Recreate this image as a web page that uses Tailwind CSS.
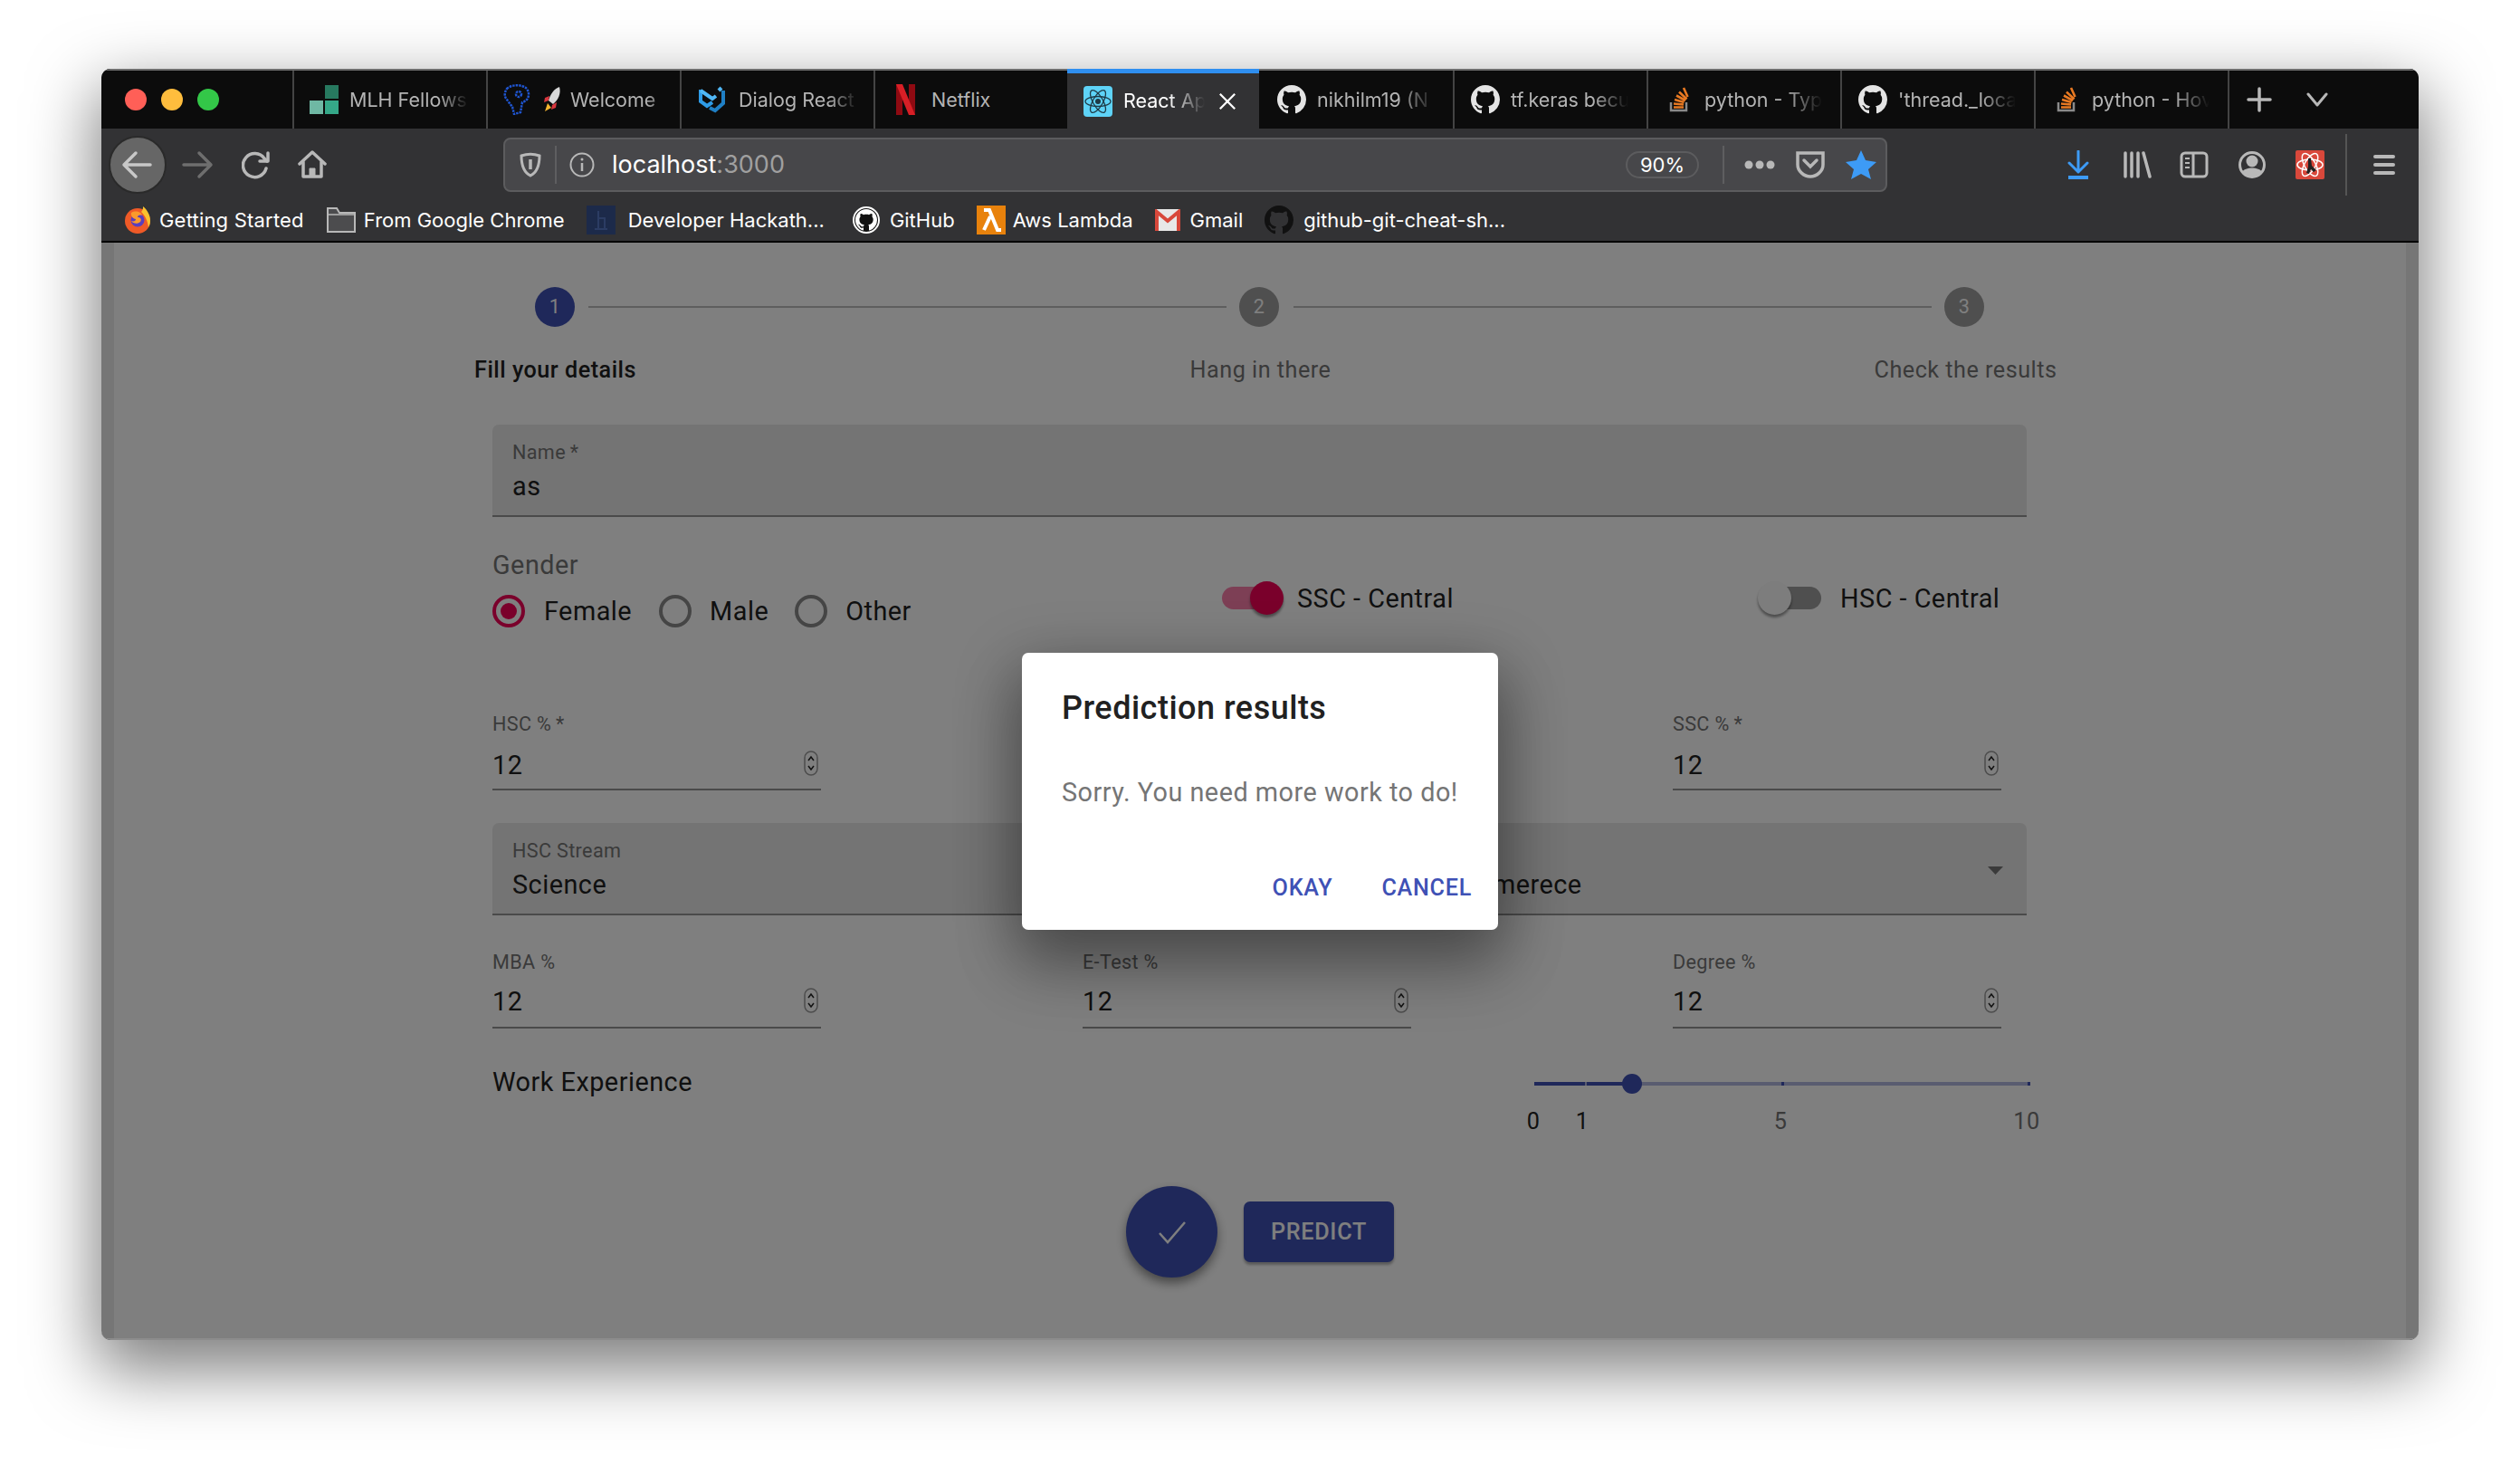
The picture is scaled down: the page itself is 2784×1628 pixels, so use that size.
<!DOCTYPE html>
<html lang="en">
<head>
  <meta charset="UTF-8" />
  <title>React App</title>
  <script src="https://cdn.jsdelivr.net/npm/@tailwindcss/browser@4"></script>
</head>
<body class="bg-white h-[1628px] pt-[76px]">
  <svg class="hidden">
    <defs>
      <symbol id="gh" viewBox="0 0 16 16"><path fill="currentColor" d="M8 0C3.58 0 0 3.58 0 8c0 3.54 2.29 6.53 5.47 7.59.4.07.55-.17.55-.38 0-.19-.01-.82-.01-1.49-2.01.37-2.53-.49-2.69-.94-.09-.23-.48-.94-.82-1.13-.28-.15-.68-.52-.01-.53.63-.01 1.08.58 1.23.82.72 1.21 1.87.87 2.33.66.07-.52.28-.87.51-1.07-1.78-.2-3.64-.89-3.64-3.95 0-.87.31-1.59.82-2.15-.08-.2-.36-1.02.08-2.12 0 0 .67-.21 2.2.82.64-.18 1.32-.27 2-.27.68 0 1.36.09 2 .27 1.53-1.04 2.2-.82 2.2-.82.44 1.1.16 1.92.08 2.12.51.56.82 1.27.82 2.15 0 3.07-1.87 3.75-3.65 3.95.29.25.54.73.54 1.48 0 1.07-.01 1.93-.01 2.2 0 .21.15.46.55.38A8.013 8.013 0 0016 8c0-4.42-3.58-8-8-8z"/></symbol>
      <symbol id="so" viewBox="0 0 32 32"><path d="M7 19v9h17v-9" fill="none" stroke="#8a8a8a" stroke-width="2.5"/><path d="M10 24.500h11M10 20.500l11 1M11 16l10.500 3M13 11.500l10 5.500M16 7.500l8.500 8M21 3l4.500 10" fill="none" stroke="#e87922" stroke-width="2.600"/></symbol>
      <symbol id="spin" viewBox="0 0 16 28"><rect x="1" y="1" width="14" height="26" rx="7" fill="none" stroke="#9a9a9a" stroke-width="1.500"/><path d="M5 11l3-4 3 4M5 17l3 4 3-4" fill="none" stroke="#222" stroke-width="1.500"/></symbol>
    </defs>
  </svg>

  <div class="ml-[112px] w-[2560px] h-[1404px] rounded-[10px] overflow-hidden flex flex-col bg-[#323234] shadow-[0_28px_72px_6px_rgba(0,0,0,0.5)] font-['Inter',sans-serif]">

    <!-- Tabs -->
    <div class="h-[66px] flex bg-[#0c0c0c] border-t-2 border-[#6e6e6e] text-[#b4b4b4] text-[21.5px] shrink-0">
      <div class="w-[211px] flex items-center pl-[26px] gap-[16px]">
        <span class="w-[24px] h-[24px] rounded-full bg-[#ff5f57]"></span>
        <span class="w-[24px] h-[24px] rounded-full bg-[#ffbd3d]"></span>
        <span class="w-[24px] h-[24px] rounded-full bg-[#33c748]"></span>
      </div>
      <div class="w-[214px] flex items-center pl-[17px] gap-[12px] border-l-2 border-[#444]">
        <svg class="w-[32px] h-[32px] shrink-0" viewBox="0 0 32 32"><rect x="17" y="0" width="15" height="15" fill="#27795f"/><rect x="17" y="17" width="15" height="15" fill="#35a888"/><rect x="0" y="17" width="15" height="15" fill="#6fb8a4"/></svg>
        <span class="w-[132px] overflow-hidden whitespace-nowrap [mask-image:linear-gradient(to_right,black_75%,transparent)]">MLH Fellows</span>
      </div>
      <div class="w-[214px] flex items-center pl-[16px] border-l-2 border-[#444]">
        <svg class="w-[32px] h-[34px] shrink-0" viewBox="0 0 32 34" fill="none" stroke="#1f55d0" stroke-width="2.500" stroke-dasharray="2.500 1"><path d="M5 5c5-5 17-5 22 0 4 6 2 13-5 15l-2 11-7 2-2-8-6-8C2 14 2 9 5 5z"/><circle cx="18" cy="11" r="3"/></svg>
        <svg class="w-[24px] h-[32px] ml-[12px] shrink-0" viewBox="0 0 24 32"><path d="M19 2c2 7-1 14-7 19l-5-4C9 10 13 4 19 2z" fill="#d8d8d8"/><path d="M8 12L3 14l-1 5 5-2zM16 19l-1 6-5 2 1-5z" fill="#d9363e"/><path d="M6 20l-3 9 7-4z" fill="#f5b52e"/></svg>
        <span class="ml-[7px] w-[112px] overflow-hidden whitespace-nowrap [mask-image:linear-gradient(to_right,black_75%,transparent)]">Welcome</span>
      </div>
      <div class="w-[214px] flex items-center pl-[19px] gap-[14px] border-l-2 border-[#444]">
        <svg class="w-[30px] h-[32px] shrink-0" viewBox="0 0 30 32" fill="none" stroke-width="4"><path d="M2 5v13l7 5 6-4" stroke="#2e9be6"/><path d="M2 6l13 9 4-3" stroke="#50b7f5"/><path d="M27 6v14l-9 8-6-3" stroke="#1f7fc4"/><path d="M25 3l-3 3" stroke="#50b7f5"/></svg>
        <span class="w-[132px] overflow-hidden whitespace-nowrap [mask-image:linear-gradient(to_right,black_75%,transparent)]">Dialog React</span>
      </div>
      <div class="w-[214px] flex items-center pl-[23px] gap-[18px] border-l-2 border-[#444]">
        <svg class="w-[21px] h-[34px] shrink-0" viewBox="0 0 21 34"><path d="M0 0h7v34l-7 0z" fill="#8f0a12"/><path d="M14 0h7v34h-7z" fill="#8f0a12"/><path d="M0 0h7l14 34h-7z" fill="#d81f26"/></svg>
        <span class="w-[132px] overflow-hidden whitespace-nowrap">Netflix</span>
      </div>
      <div class="w-[212px] flex items-center pl-[18px] gap-[12px] bg-[#323234] -mt-[2px] border-t-[5px] border-[#2f8ff0] text-white relative">
        <svg class="w-[32px] h-[34px] shrink-0" viewBox="0 0 32 34"><rect width="32" height="34" rx="4" fill="#5ed3f7"/><g fill="none" stroke="#1e3a46" stroke-width="1.300"><ellipse cx="16" cy="17" rx="14" ry="5.500"/><ellipse cx="16" cy="17" rx="14" ry="5.500" transform="rotate(60 16 17)"/><ellipse cx="16" cy="17" rx="14" ry="5.500" transform="rotate(120 16 17)"/></g><circle cx="16" cy="17" r="3" fill="#1e3a46"/></svg>
        <span class="w-[90px] overflow-hidden whitespace-nowrap [mask-image:linear-gradient(to_right,black_55%,transparent)]">React Ap</span>
        <svg class="w-[20px] h-[20px] ml-[3px] shrink-0" viewBox="0 0 22 22" fill="none" stroke="#fff" stroke-width="2.500"><path d="M2 2l18 18M20 2L2 20"/></svg>
      </div>
      <div class="w-[214px] flex items-center pl-[20px] gap-[12px] text-[#b4b4b4]">
        <svg class="w-[32px] h-[32px] shrink-0 text-[#e4e4e4]"><use href="#gh"/></svg>
        <span class="w-[130px] overflow-hidden whitespace-nowrap [mask-image:linear-gradient(to_right,black_70%,transparent)]">nikhilm19 (N</span>
      </div>
      <div class="w-[214px] flex items-center pl-[18px] gap-[12px] border-l-2 border-[#444]">
        <svg class="w-[32px] h-[32px] shrink-0 text-[#e4e4e4]"><use href="#gh"/></svg>
        <span class="w-[130px] overflow-hidden whitespace-nowrap [mask-image:linear-gradient(to_right,black_70%,transparent)]">tf.keras becu</span>
      </div>
      <div class="w-[214px] flex items-center pl-[18px] gap-[12px] border-l-2 border-[#444]">
        <svg class="w-[32px] h-[32px] shrink-0"><use href="#so"/></svg>
        <span class="w-[130px] overflow-hidden whitespace-nowrap [mask-image:linear-gradient(to_right,black_70%,transparent)]">python - Typ</span>
      </div>
      <div class="w-[214px] flex items-center pl-[18px] gap-[12px] border-l-2 border-[#444]">
        <svg class="w-[32px] h-[32px] shrink-0 text-[#e4e4e4]"><use href="#gh"/></svg>
        <span class="w-[130px] overflow-hidden whitespace-nowrap [mask-image:linear-gradient(to_right,black_70%,transparent)]">'thread._loca</span>
      </div>
      <div class="w-[214px] flex items-center pl-[18px] gap-[12px] border-l-2 border-[#444]">
        <svg class="w-[32px] h-[32px] shrink-0"><use href="#so"/></svg>
        <span class="w-[130px] overflow-hidden whitespace-nowrap [mask-image:linear-gradient(to_right,black_70%,transparent)]">python - Hov</span>
      </div>
      <div class="flex-1 flex items-center pl-[19px] border-l-2 border-[#444]">
        <svg class="w-[28px] h-[28px]" viewBox="0 0 28 28" stroke="#b8b8b8" stroke-width="3.500" stroke-linecap="round"><path d="M14 2v24M2 14h24"/></svg>
        <svg class="w-[24px] h-[16px] ml-[38px]" viewBox="0 0 24 16" fill="none" stroke="#b8b8b8" stroke-width="3" stroke-linecap="round" stroke-linejoin="round"><path d="M2 2l10 12L22 2"/></svg>
      </div>
    </div>

    <!-- Toolbar -->
    <div class="h-[76px] flex items-center pl-[8px] pt-[4px] shrink-0 text-[#b8b8b8]">
      <div class="w-[64px] h-[64px] rounded-full bg-[#666] border-2 border-[#2a2a2a] flex items-center justify-center">
        <svg class="w-[36px] h-[32px]" viewBox="0 0 36 32" fill="none" stroke="#c8c8c8" stroke-width="3.500" stroke-linecap="round" stroke-linejoin="round"><path d="M32 16H3M16 3L3 16l13 13"/></svg>
      </div>
      <svg class="w-[36px] h-[32px] ml-[16px]" viewBox="0 0 36 32" fill="none" stroke="#6e6e6e" stroke-width="3.500" stroke-linecap="round" stroke-linejoin="round"><path d="M3 16h29M20 3l13 13-13 13"/></svg>
      <svg class="w-[32px] h-[32px] ml-[31px]" viewBox="0 0 32 32" fill="none" stroke="#b8b8b8" stroke-width="3.500" stroke-linecap="round" stroke-linejoin="round"><path d="M27 20a13 13 0 1 1-2-11l3 3"/><path d="M29 3v9h-9"/></svg>
      <svg class="w-[32px] h-[32px] ml-[30px]" viewBox="0 0 32 32" fill="none" stroke="#b8b8b8" stroke-width="3.500" stroke-linecap="round" stroke-linejoin="round"><path d="M2 15L16 2l14 13"/><path d="M6 13v16h20V13"/><path d="M13 29v-9h6v9" fill="#b8b8b8" stroke-width="1"/></svg>

      <div class="ml-[195px] w-[1529px] h-[60px] rounded-[8px] bg-[#47474a] border-2 border-[#5c5c5e] flex items-center pl-[16px] pr-[10px]">
        <svg class="w-[24px] h-[28px]" viewBox="0 0 24 28" fill="none" stroke="#b8b8b8" stroke-width="3"><path d="M2 4c6-2 14-2 20 0 0 10-2 18-10 22C4 22 2 14 2 4z"/><path d="M12 8v11" stroke-width="3.500"/></svg>
        <span class="w-[2px] h-[42px] bg-[#5e5e60] ml-[15px]"></span>
        <svg class="w-[28px] h-[28px] ml-[14px]" viewBox="0 0 28 28" fill="none" stroke="#b8b8b8" stroke-width="2"><circle cx="14" cy="14" r="12.500"/><path d="M14 12v9" stroke-width="2.500"/><circle cx="14" cy="8" r="1.500" fill="#b8b8b8" stroke="none"/></svg>
        <span class="ml-[19px] text-[27px] text-white whitespace-nowrap">localhost<span class="text-[#a0a0a0]">:3000</span></span>
        <span class="ml-auto w-[81px] h-[30px] rounded-full border-2 border-[#5c5c5e] flex items-center justify-center text-[22px] text-white">90%</span>
        <span class="w-[2px] h-[42px] bg-[#5e5e60] ml-[26px]"></span>
        <svg class="w-[34px] h-[10px] ml-[22px]" viewBox="0 0 34 10" fill="#b8b8b8"><circle cx="5" cy="5" r="4.500"/><circle cx="17" cy="5" r="4.500"/><circle cx="29" cy="5" r="4.500"/></svg>
        <svg class="w-[32px] h-[30px] ml-[23px]" viewBox="0 0 32 30" fill="none" stroke="#b8b8b8" stroke-width="3.500"><path d="M2 2h28v13c0 7-7 13-14 13S2 22 2 15z"/><path d="M9 10l7 7 7-7" stroke-linecap="round"/></svg>
        <svg class="w-[34px] h-[32px] ml-[23px]" viewBox="0 0 34 32" fill="#3d9bf6"><path d="M17 0l5 11 12 2-9 8 3 11-11-6-11 6 3-11-9-8 12-2z"/></svg>
      </div>

      <svg class="w-[26px] h-[32px] ml-[198px]" viewBox="0 0 26 32" fill="none" stroke="#3d9bf6" stroke-width="3" stroke-linecap="round" stroke-linejoin="round"><path d="M13 1v22M3 14l10 10 10-10"/><path d="M2 30h22" stroke-width="4" stroke-linecap="butt"/></svg>
      <svg class="w-[32px] h-[30px] ml-[36px]" viewBox="0 0 32 30" fill="none" stroke="#b8b8b8" stroke-width="3.500" stroke-linecap="round"><path d="M3 2v26M10 2v26M17 2v26M23 2l7 26"/></svg>
      <svg class="w-[32px] h-[30px] ml-[31px]" viewBox="0 0 32 30" fill="none" stroke="#b8b8b8" stroke-width="3"><rect x="2" y="2" width="28" height="26" rx="4"/><path d="M15 2v26"/><path d="M6 8h5M6 13h5M6 18h5" stroke-width="2"/></svg>
      <svg class="w-[30px] h-[32px] ml-[33px]" viewBox="0 0 30 32"><circle cx="15" cy="16" r="13.500" fill="none" stroke="#b8b8b8" stroke-width="3"/><circle cx="15" cy="12" r="6.500" fill="#b8b8b8"/><path d="M4 24c3-6 19-6 22 0-3 6-19 6-22 0z" fill="#b8b8b8"/></svg>
      <svg class="w-[32px] h-[32px] ml-[33px]" viewBox="0 0 32 32"><rect width="32" height="32" rx="2" fill="#d9483b"/><g fill="none" stroke="#fff" stroke-width="1.500"><ellipse cx="16" cy="16" rx="14" ry="6"/><ellipse cx="16" cy="16" rx="14" ry="6" transform="rotate(60 16 16)"/><ellipse cx="16" cy="16" rx="14" ry="6" transform="rotate(120 16 16)"/></g><path d="M14 9h3l1 8 5 5-3 2-3-3-2 5-3-1 2-7z" fill="#222"/></svg>
      <span class="w-[2px] h-[68px] bg-[#555] ml-[23px]"></span>
      <svg class="w-[24px] h-[22px] ml-[29px]" viewBox="0 0 24 22" fill="#b8b8b8"><rect width="24" height="4" rx="2"/><rect y="9" width="24" height="4" rx="2"/><rect y="18" width="24" height="4" rx="2"/></svg>
    </div>

    <!-- Bookmarks -->
    <div class="h-[48px] flex items-center pl-[25px] pt-[2px] text-[22px] text-white whitespace-nowrap shrink-0">
      <svg class="w-[30px] h-[30px]" viewBox="0 0 30 30"><circle cx="15" cy="16" r="14" fill="#ef5a27"/><path d="M21 0c5 4 8 10 8 16 0 3-1 5-2 7-1-8-4-13-8-17 2-2 2-4 2-6z" fill="#fbc22e"/><circle cx="15" cy="15" r="7.500" fill="#5a3fbd"/><path d="M8 7c5-3 11-1 12 3-3-1-5 0-5 2 3 0 5 2 3 5-3 3-8 2-10-1 3 1 5 0 5-2-3 0-6-4-5-7z" fill="#fb9a2c"/></svg>
      <span class="ml-[9px] tracking-[0.2px]">Getting Started</span>
      <svg class="w-[32px] h-[28px] ml-[25px]" viewBox="0 0 32 28"><path d="M1 27V1h10l3 5h17v21z" fill="#4c4c4e" stroke="#b8b8b8" stroke-width="2"/><path d="M1 8h30" stroke="#b8b8b8" stroke-width="1.500"/></svg>
      <span class="ml-[9px]">From Google Chrome</span>
      <svg class="w-[32px] h-[32px] ml-[24px]" viewBox="0 0 32 32"><rect width="32" height="32" fill="#1c2a4a"/><path d="M13 6v20M13 14h7v12M9 26h14" fill="none" stroke="#2b3c63" stroke-width="2"/></svg>
      <span class="ml-[14px]">Developer Hackath...</span>
      <span class="ml-[31px] w-[30px] h-[30px] rounded-full border-2 border-white bg-[#111] flex items-center justify-center"><svg class="w-[24px] h-[24px] text-white"><use href="#gh"/></svg></span>
      <span class="ml-[11px]">GitHub</span>
      <svg class="w-[32px] h-[32px] ml-[24px]" viewBox="0 0 32 32"><rect width="32" height="32" fill="#e8820c"/><path d="M8 5h6l9 22h4M15 12L8 27" fill="none" stroke="#fff" stroke-width="4"/></svg>
      <span class="ml-[8px]">Aws Lambda</span>
      <svg class="w-[28px] h-[24px] ml-[24px]" viewBox="0 0 28 24"><rect width="28" height="24" rx="2" fill="#e8e8e8"/><path d="M2 24V3l12 10L26 3v21" fill="none" stroke="#d8483b" stroke-width="4"/></svg>
      <span class="ml-[11px]">Gmail</span>
      <svg class="w-[32px] h-[32px] ml-[24px] text-[#111]"><use href="#gh"/></svg>
      <span class="ml-[11px]">github-git-cheat-sh...</span>
    </div>
    <div class="h-[2px] bg-black shrink-0"></div>

    <!-- Page -->
    <div class="relative flex-1 bg-white border-x-[14px] border-[#767676] font-['Roboto',sans-serif] text-[#212121] text-[28.8px] tracking-[0.5px]">

      <!-- Stepper -->
      <div class="pt-[49px]">
        <div class="ml-[465px] w-[1601px] flex items-center">
          <span class="w-[44px] h-[44px] rounded-full bg-[#3f51b5] text-white text-[21.6px] flex items-center justify-center shrink-0">1</span>
          <span class="flex-1 h-[2px] bg-[#bdbdbd] ml-[15px] mr-[14px]"></span>
          <span class="w-[44px] h-[44px] rounded-full bg-[#9e9e9e] text-white text-[21.6px] flex items-center justify-center shrink-0">2</span>
          <span class="flex-1 h-[2px] bg-[#bdbdbd] ml-[16px] mr-[14px]"></span>
          <span class="w-[44px] h-[44px] rounded-full bg-[#9e9e9e] text-white text-[21.6px] flex items-center justify-center shrink-0">3</span>
        </div>
        <div class="ml-[98px] mt-[33px] flex text-[25.2px] leading-[30px] text-center text-[#757575]">
          <span class="w-[779px] font-medium text-[#212121]">Fill your details</span>
          <span class="w-[779px]">Hang in there</span>
          <span class="w-[779px]">Check the results</span>
        </div>
      </div>

      <div class="ml-[418px] w-[1695px]">
        <!-- Name -->
        <div class="mt-[45px] h-[102px] bg-[#e8e8e8] rounded-t-[7px] border-b-2 border-[#949494] pl-[22px] pt-[18px]">
          <div class="text-[21.6px] leading-[26px] tracking-[0.35px] text-[#757575]">Name&thinsp;*</div>
          <div class="mt-[4px] leading-[40px]">as</div>
        </div>

        <!-- Gender and switches -->
        <div class="mt-[36px] flex items-start">
          <div class="w-[806px]">
            <div class="leading-[34px] text-[#757575]">Gender</div>
            <div class="mt-[16px] h-[36px] flex items-center">
              <span class="w-[36px] h-[36px] rounded-full border-[4px] border-[#f50057] flex items-center justify-center"><span class="w-[18px] h-[18px] rounded-full bg-[#f50057]"></span></span>
              <span class="ml-[21px] pt-[1px]">Female</span>
              <span class="ml-[30px] w-[36px] h-[36px] rounded-full border-[4px] border-[#8a8a8a]"></span>
              <span class="ml-[20px] pt-[1px]">Male</span>
              <span class="ml-[29px] w-[36px] h-[36px] rounded-full border-[4px] border-[#8a8a8a]"></span>
              <span class="ml-[20px] pt-[1px]">Other</span>
            </div>
          </div>
          <div class="w-[592px] mt-[35px] h-[37px] flex items-center gap-[16px]">
            <span class="relative w-[67px] h-[37px]">
              <span class="absolute left-0 top-[6px] w-[61px] h-[25px] rounded-full bg-[#f50057]/50"></span>
              <span class="absolute left-[31px] top-0 w-[37px] h-[37px] rounded-full bg-[#f50057] shadow-[0_3px_3px_rgba(0,0,0,0.4)]"></span>
            </span>
            <span class="pt-[3px]">SSC - Central</span>
          </div>
          <div class="mt-[35px] h-[37px] flex items-center gap-[21px]">
            <span class="relative w-[70px] h-[37px]">
              <span class="absolute left-[8px] top-[6px] w-[62px] h-[25px] rounded-full bg-[#9e9e9e]"></span>
              <span class="absolute left-0 top-0 w-[37px] h-[37px] rounded-full bg-[#fafafa] shadow-[0_3px_3px_rgba(0,0,0,0.4)]"></span>
            </span>
            <span class="pt-[3px]">HSC - Central</span>
          </div>
        </div>

        <!-- HSC and SSC marks -->
        <div class="mt-[94px] w-[1667px] flex justify-between">
          <div class="w-[363px] h-[86px] border-b-2 border-[#949494]">
            <div class="text-[21.6px] leading-[26px] tracking-[0.35px] text-[#757575]">HSC %&thinsp;*</div>
            <div class="mt-[12px] h-[40px] leading-[40px] flex items-center justify-between pr-[3px]"><span>12</span><svg class="w-[16px] h-[28px] -mt-[4px]"><use href="#spin"/></svg></div>
          </div>
          <div class="w-[363px]"></div>
          <div class="w-[363px] h-[86px] border-b-2 border-[#949494]">
            <div class="text-[21.6px] leading-[26px] tracking-[0.35px] text-[#757575]">SSC %&thinsp;*</div>
            <div class="mt-[12px] h-[40px] leading-[40px] flex items-center justify-between pr-[3px]"><span>12</span><svg class="w-[16px] h-[28px] -mt-[4px]"><use href="#spin"/></svg></div>
          </div>
        </div>

        <!-- Streams -->
        <div class="mt-[36px] flex justify-between">
          <div class="w-[674px] h-[102px] bg-[#e8e8e8] rounded-t-[7px] border-b-2 border-[#949494] pl-[22px] pt-[18px]">
            <div class="text-[21.6px] leading-[26px] tracking-[0.35px] text-[#757575]">HSC Stream</div>
            <div class="mt-[4px] leading-[40px]">Science</div>
          </div>
          <div class="relative w-[674px] h-[102px] bg-[#e8e8e8] rounded-t-[7px] border-b-2 border-[#949494] pl-[22px] pt-[48px]">
            <div class="leading-[40px]">Commerece</div>
            <svg class="absolute right-[26px] top-[48px] w-[17px] h-[9px]" viewBox="0 0 17 9" fill="#757575"><path d="M0 0h17l-8.500 9z"/></svg>
          </div>
        </div>

        <!-- MBA, E-Test, Degree -->
        <div class="mt-[39px] w-[1667px] flex justify-between">
          <div class="w-[363px] h-[86px] border-b-2 border-[#949494]">
            <div class="text-[21.6px] leading-[26px] tracking-[0.35px] text-[#757575]">MBA %</div>
            <div class="mt-[10px] h-[40px] leading-[40px] flex items-center justify-between pr-[3px]"><span>12</span><svg class="w-[16px] h-[28px] -mt-[2px]"><use href="#spin"/></svg></div>
          </div>
          <div class="w-[363px] h-[86px] border-b-2 border-[#949494]">
            <div class="text-[21.6px] leading-[26px] tracking-[0.35px] text-[#757575]">E-Test %</div>
            <div class="mt-[10px] h-[40px] leading-[40px] flex items-center justify-between pr-[3px]"><span>12</span><svg class="w-[16px] h-[28px] -mt-[2px]"><use href="#spin"/></svg></div>
          </div>
          <div class="w-[363px] h-[86px] border-b-2 border-[#949494]">
            <div class="text-[21.6px] leading-[26px] tracking-[0.35px] text-[#757575]">Degree %</div>
            <div class="mt-[10px] h-[40px] leading-[40px] flex items-center justify-between pr-[3px]"><span>12</span><svg class="w-[16px] h-[28px] -mt-[2px]"><use href="#spin"/></svg></div>
          </div>
        </div>

        <!-- Work experience -->
        <div class="mt-[39px] flex items-start">
          <div class="w-[1151px] shrink-0 leading-[40px]">Work Experience</div>
          <div class="relative w-[548px] shrink-0 h-[80px] text-[25.2px] leading-[30px]">
            <span class="absolute left-0 top-[20px] w-full h-[4px] bg-[#3f51b5]/40"></span>
            <span class="absolute left-0 top-[20px] w-[108px] h-[4px] bg-[#3f51b5]"></span>
            <span class="absolute left-[56px] top-[20px] w-[2px] h-[4px] bg-white/60"></span>
            <span class="absolute left-[273px] top-[20px] w-[3px] h-[4px] bg-[#3f51b5]"></span>
            <span class="absolute left-[545px] top-[20px] w-[3px] h-[4px] bg-[#3f51b5]"></span>
            <span class="absolute left-[97px] top-[11px] w-[22px] h-[22px] rounded-full bg-[#3f51b5]"></span>
            <span class="absolute -left-[1px] top-[49px] -translate-x-1/2">0</span>
            <span class="absolute left-[53px] top-[49px] -translate-x-1/2">1</span>
            <span class="absolute left-[272px] top-[49px] -translate-x-1/2 text-[#757575]">5</span>
            <span class="absolute left-[544px] top-[49px] -translate-x-1/2 text-[#757575]">10</span>
          </div>
        </div>
      </div>

      <!-- Predict -->
      <div class="ml-[1118px] mt-[55px] flex items-center gap-[29px]">
        <div class="w-[101px] h-[101px] rounded-full bg-[#3f51b5] flex items-center justify-center shadow-[0_6px_12px_rgba(0,0,0,0.45)]">
          <svg class="w-[32px] h-[26px]" viewBox="0 0 32 26" fill="none" stroke="#fff" stroke-width="2.500"><path d="M2 14l9 10L30 2"/></svg>
        </div>
        <div class="w-[166px] h-[67px] rounded-[7px] bg-[#3f51b5] text-white text-[25.2px] font-medium tracking-[0.72px] flex items-center justify-center shadow-[0_3px_3px_rgba(0,0,0,0.3)]">PREDICT</div>
      </div>

      <!-- Dialog backdrop -->
      <div class="absolute inset-0 pt-[2px] bg-black/50 flex items-center justify-center">
        <div class="w-[526px] h-[306px] rounded-[7px] bg-white flex flex-col shadow-[0_20px_68px_6px_rgba(0,0,0,0.3),0_40px_70px_5px_rgba(0,0,0,0.2)]">
          <div class="mt-[39px] pl-[44px] text-[36px] leading-[44px] font-medium text-[#212121]">Prediction results</div>
          <div class="mt-[49px] pl-[44px] leading-[44px] text-[#757575]">Sorry. You need more work to do!</div>
          <div class="mt-[64px] flex justify-end gap-[54px] pr-[29px] text-[25.2px] leading-[40px] font-medium tracking-[0.72px] text-[#3f51b5]">
            <span>OKAY</span>
            <span>CANCEL</span>
          </div>
        </div>
      </div>
    </div>
    <div class="h-[2px] bg-[#8c8c8c] shrink-0"></div>
  </div>
</body>
</html>
